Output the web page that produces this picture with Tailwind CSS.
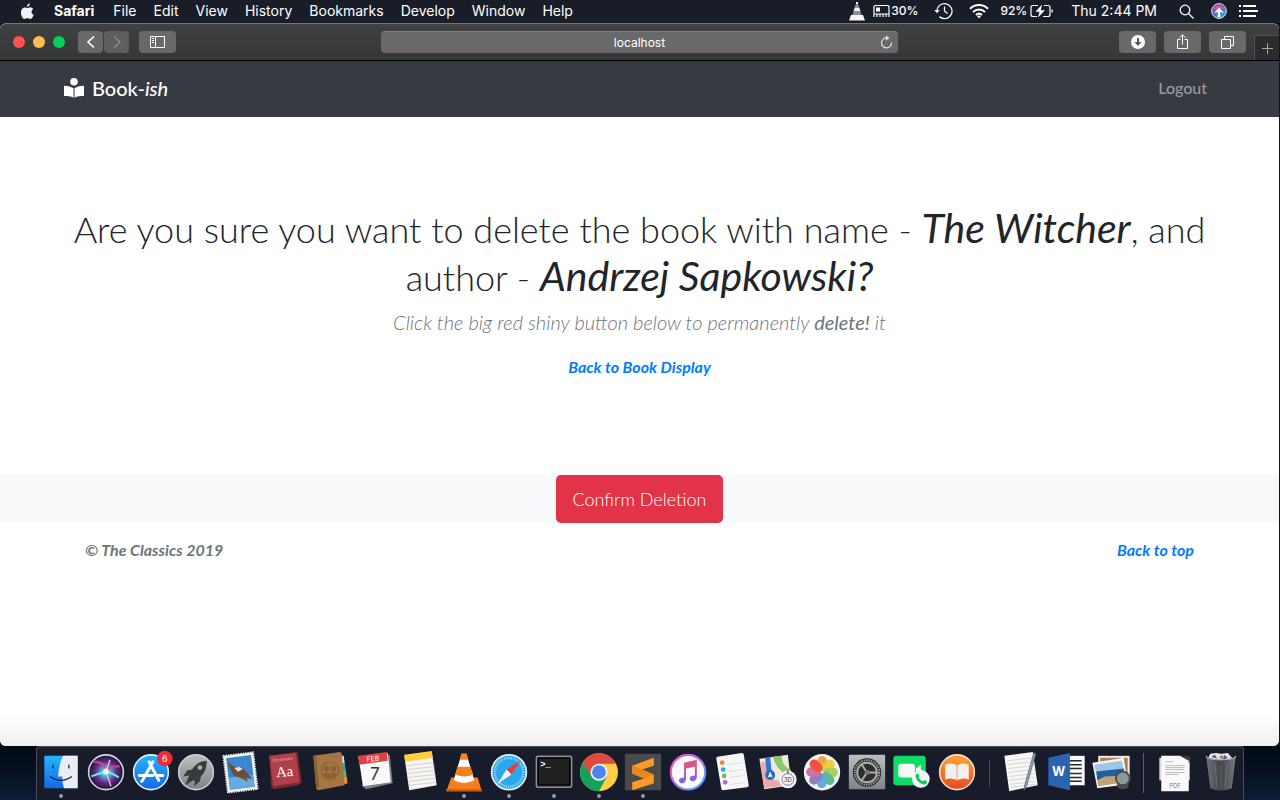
<!DOCTYPE html>
<html lang="en">
<head>
<meta charset="utf-8">
<title>Book-ish</title>
<script src="https://cdn.jsdelivr.net/npm/@tailwindcss/browser@4"></script>
</head>
<body class="min-h-screen flex flex-col overflow-x-hidden bg-[#0b1526] font-['Inter',sans-serif]">

<!-- Menu bar -->
<header class="h-[23px] shrink-0 flex items-center justify-between bg-[#191d28] pl-5 pr-[22px] pb-px text-[14px] leading-[22px] text-white">
  <nav class="flex items-center gap-[17px] whitespace-nowrap" aria-label="Menu bar">
    <button class="mr-[3px]" aria-label="Apple"><svg width="14" height="18" viewBox="0 0 14 18" fill="#f2f2f2"><path d="M9.9 1.6C9.9 3.4 8.6 4.9 7 5c-.2-1.700 1.200-3.300 2.900-3.400zM10 5.300c1.300 0 2.500.7 3.200 1.800-2.500 1.500-2 5 .5 5.900-.6 1.700-2 4-3.400 4-1.200 0-1.600-.7-2.900-.7s-1.800.7-2.900.7C2.700 17 .9 13.500.9 10.500c0-3.200 2-5.100 4-5.100 1.200 0 2 .7 2.800.7.600 0 1.500-.8 2.300-.8z"/></svg></button>
    <button class="font-bold mr-[2px]">Safari</button>
    <button>File</button><button>Edit</button><button>View</button><button>History</button><button>Bookmarks</button><button>Develop</button><button>Window</button><button>Help</button>
  </nav>
  <div class="flex items-center whitespace-nowrap">
    <svg class="mr-2" width="16" height="20" viewBox="0 0 16 20"><path d="M7 2.500h2l1.300 4H5.700zM4.600 10h6.800l1.200 4H3.400z" fill="#8b8e94"/><path d="M5.700 6.500h4.600l1.100 3.500H4.600zM2 14h12l2 5.500H0zM7 1h2v2H7z" fill="#f3f3f3"/></svg>
    <svg class="mr-px" width="17" height="14" viewBox="0 0 17 14" fill="none" stroke="#fff" stroke-width="1.200"><path d="M1 10V2.500L2 1.500h13l1 1V10zM1 10v3M4 10v3M7 10v3M10 10v3M13 10v3M16 10v3"/><path d="M3 3.500h4v4H3z" fill="#fff" stroke="none"/></svg>
    <span class="mr-4 text-xs font-medium">30%</span>
    <svg class="mr-[16px]" width="19" height="18" viewBox="0 0 19 18" fill="none" stroke="#fff" stroke-width="1.200"><path d="M3 9a7.500 7.500 0 1 1 2.500 5.700" /><path d="M5.500 14.700a7.500 7.500 0 0 0 4 1.800" stroke-dasharray="1 1"/><path d="M10.500 4.500V9l3 2.500"/><path d="M.3 8h5.400L3 11.200z" fill="#fff" stroke="none"/></svg>
    <svg class="mr-[11px]" width="20" height="16" viewBox="0 0 20 16" fill="none" stroke="#fff" stroke-width="2"><path d="M1 5.800C6 .8 14 .8 19 5.800M4 9c3.400-3.300 8.600-3.300 12 0M7 12c1.800-1.600 4.200-1.600 6 0"/><path d="M10 15.500l-2-2.200c1.200-1 2.800-1 4 0z" fill="#fff" stroke="none"/></svg>
    <span class="mr-[3px] text-xs font-medium">92%</span>
    <svg class="mr-[17px]" width="24" height="14" viewBox="0 0 24 14" fill="none" stroke="#fff" stroke-width="1.200"><path d="M8 1.500H3Q1 1.500 1 3.500v7q0 2 2 2h4M14 1.500h4q2 0 2 2v7q0 2-2 2h-5"/><path d="M12 .5L5.500 7.700h4L8 13.500 15 6.300h-4.200zM21.500 5q3 2 0 4z" fill="#fff" stroke="none"/></svg>
    <span class="mr-[22px]">Thu 2:44 PM</span>
    <button class="mr-[17px]" aria-label="Search"><svg width="15" height="15" viewBox="0 0 15 15" fill="none" stroke="#fff" stroke-width="1.300"><circle cx="6" cy="6" r="4.800"/><path d="M9.500 9.500l5 5"/></svg></button>
    <button class="mr-3" aria-label="Siri"><svg width="16" height="16" viewBox="0 0 16 16"><defs><linearGradient id="s1" x2="1" y2="1"><stop stop-color="#b03cc9"/><stop offset=".5" stop-color="#3a6fd0"/><stop offset="1" stop-color="#25c8d8"/></linearGradient></defs><circle cx="8" cy="8" r="7.400" fill="url(#s1)" stroke="#ddd"/><path d="M1.500 5.500Q8 0 14 5.500L8 7z" fill="#ec4f8d"/><path d="M8 4.500l5 5.500-4-1 .5 5h-3L7 9l-4 1z" fill="#fff"/></svg></button>
    <button aria-label="Notifications"><svg width="19" height="12" viewBox="0 0 19 12" stroke="#fff" stroke-width="2"><path d="M0 1h2M0 6h2M0 11h2M4 1h13M4 6h15M4 11h13" /></svg></button>
  </div>
</header>

<!-- Browser window -->
<div class="grow mr-px flex flex-col rounded-t-md rounded-b-md overflow-hidden bg-white border-t border-[#747576]">
  <div class="relative h-[37px] shrink-0 grid grid-cols-[1fr_517px_1fr] items-center bg-linear-to-b from-[#404142] to-[#353637] border-b border-black text-white">
    <div class="flex items-center pl-[13px]">
      <div class="flex gap-2 mr-[13px]">
        <button class="size-3 rounded-full bg-[#ff5250]" aria-label="Close"></button>
        <button class="size-3 rounded-full bg-[#ffbd4f]" aria-label="Minimize"></button>
        <button class="size-3 rounded-full bg-[#05cf58]" aria-label="Zoom"></button>
      </div>
      <button class="w-[25px] h-[22px] grid place-items-center rounded bg-[#68696b] mr-px" aria-label="Back"><svg width="10" height="14" viewBox="0 0 10 14" fill="none" stroke="#fff" stroke-width="1.600"><path d="M8 1.500L2 7l6 5.500"/></svg></button>
      <button class="w-[25px] h-[22px] grid place-items-center rounded bg-[#5d5e60] mr-[10px]" aria-label="Forward"><svg width="10" height="14" viewBox="0 0 10 14" fill="none" stroke="#8c8d8f" stroke-width="1.400"><path d="M2 1.500L8 7l-6 5.500"/></svg></button>
      <button class="w-[37px] h-[22px] grid place-items-center rounded bg-[#68696b]" aria-label="Sidebar"><svg width="15" height="12" viewBox="0 0 15 12" fill="none" stroke="#fff"><path d="M.5.500h14v11H.5zM5.500.500v11M2 2.500h2M2 4.500h2M2 6.500h2"/></svg></button>
    </div>
    <div class="relative">
      <input class="block w-full h-[22px] rounded bg-[#69696b] border-t border-[#7d7d7f] text-center text-xs text-white" type="text" value="localhost" aria-label="Address">
      <button class="absolute right-[5px] top-1" aria-label="Reload"><svg width="13" height="14" viewBox="0 0 13 14" fill="none" stroke="#e4e4e4" stroke-width="1.200"><path d="M7.500 3A5 5 0 1 0 11.500 7.500"/><path d="M6 .5v5L9.500 3z" fill="#e4e4e4" stroke="none"/></svg></button>
    </div>
    <div class="flex items-center justify-end gap-2 pr-[33px]">
      <button class="w-[37px] h-[22px] grid place-items-center rounded bg-[#68696b]" aria-label="Downloads"><svg width="14" height="14" viewBox="0 0 14 14"><circle cx="7" cy="7" r="7" fill="#fff"/><path d="M6 3h2v4h2.500L7 11 3.500 7H6z" fill="#58595b"/></svg></button>
      <button class="w-[37px] h-[22px] grid place-items-center rounded bg-[#68696b]" aria-label="Share"><svg width="11" height="16" viewBox="0 0 11 16" fill="none" stroke="#fff"><path d="M3.500 5.500H.5v9h10v-9H7.500M5.500 10.500V1M2.500 3.800l3-3 3 3"/></svg></button>
      <button class="w-[37px] h-[22px] grid place-items-center rounded bg-[#68696b]" aria-label="Tabs"><svg width="13" height="13" viewBox="0 0 13 13" fill="none" stroke="#fff"><path d="M.5 3.500h9v9h-9zM3.500 3.500V.500h9v9h-3"/></svg></button>
    </div>
    <button class="absolute right-0 bottom-0 w-[25px] h-[25px] grid place-items-center bg-[#2b2b2c] border-l border-t border-[#525354]" aria-label="New tab"><svg width="11" height="11" viewBox="0 0 11 11" stroke="#a5a5a6"><path d="M5.500 0v11M0 5.500h11"/></svg></button>
  </div>

  <div class="grow flex flex-col font-['Lato',sans-serif] text-[#212529] bg-linear-to-t from-[#eeeeee] via-white via-[30px] to-white">
    <nav class="h-14 shrink-0 flex items-center justify-between bg-[#363a42] pl-16 pr-[72px] pb-0.5">
      <a href="#" class="flex items-center gap-2 text-[20px] leading-[30px] text-white"><svg width="20" height="20" viewBox="0 0 20 20" fill="#fff"><circle cx="10" cy="3.800" r="3.800"/><path d="M0 7.800c3.600 0 7 .8 9.500 2.500v9.500C7 18.200 3.800 18 0 18zM20 7.800c-3.600 0-7 .8-9.500 2.500v9.500c2.500-1.600 5.700-1.800 9.500-1.800z"/></svg><span class="font-medium">Book-<i>ish</i></span></a>
      <a href="#" class="text-base text-[#999b9e] font-medium">Logout</a>
    </nav>
    <main class="flex flex-col items-center">
      <section class="px-8 pt-[88px] pb-24 text-center max-w-[1200px]">
        <h1 class="text-[36px] leading-[48px] font-light">Are you sure you want to delete the book with name - <b class="text-[41px] leading-none"><i>The Witcher</i></b>, and author - <b class="text-[41px] leading-none"><i>Andrzej Sapkowski?</i></b></h1>
        <p class="mt-1.5 mb-4.5 text-[20px] leading-[30px] font-light italic text-[#6c757d]">Click the big red shiny button below to permanently <b>delete!</b> it</p>
        <a href="#" class="text-base font-bold italic text-[#007bff]">Back to Book Display</a>
      </section>
      <div class="w-full flex justify-center bg-[#f7f9fb]">
        <button class="h-12 px-[17px] rounded-[5px] bg-[#e23349] text-[18px] font-light text-white">Confirm Deletion</button>
      </div>
    </main>
    <footer class="flex justify-between px-[85px] pt-[15px] text-base italic font-bold text-[#6c757d]">
      <p>© The Classics 2019</p>
      <a href="#" class="text-[#007bff]">Back to top</a>
    </footer>
  </div>
</div>

<!-- Dock -->
<div class="h-[54px] shrink-0 bg-linear-to-b from-[#030914] to-[#0d1b35]">
<svg class="absolute size-0" aria-hidden="true"><defs>
<linearGradient id="gb" x2="0" y2="1"><stop stop-color="#22b6fa"/><stop offset="1" stop-color="#1468ea"/></linearGradient>
<linearGradient id="go" x2="0" y2="1"><stop stop-color="#fba733"/><stop offset="1" stop-color="#e8481e"/></linearGradient>
<linearGradient id="gg" x2="0" y2="1"><stop stop-color="#b9c0c0"/><stop offset="1" stop-color="#7b8384"/></linearGradient>
<linearGradient id="gm" x2="1" y2="1"><stop stop-color="#f64fa6"/><stop offset=".5" stop-color="#a86bf0"/><stop offset="1" stop-color="#2fb8f5"/></linearGradient>
<linearGradient id="gn" x2="0" y2="1"><stop stop-color="#f3526a"/><stop offset="1" stop-color="#6d6af0"/></linearGradient>
<linearGradient id="gt" x2="1"><stop stop-color="#6d7376"/><stop offset=".5" stop-color="#3f4548"/><stop offset="1" stop-color="#777c7e"/></linearGradient>
<radialGradient id="gs"><stop stop-color="#bffcff"/><stop offset=".25" stop-color="#4cb8d0"/><stop offset=".6" stop-color="#6b2a86"/><stop offset="1" stop-color="#131638"/></radialGradient>
</defs></svg>
<div class="h-full mx-9 flex items-start rounded-t border-t border-x border-[#4a4e58] bg-[#171b2a] pl-[2px]">
  <div class="flex-1 flex justify-center"><svg width="44" height="53" viewBox="0 0 44 54"><path d="M5 9h34v33H5z" fill="url(#gb)"/><path d="M24 9h15v33H25q-2-7-1.500-12H19Q20 17 24 9z" fill="#e9eef5"/><path d="M14 18v4M30 18v4" stroke="#123" stroke-width="1.300"/><path d="M11 30q11 8 22 0" fill="none" stroke="#123" stroke-width="1.300"/><circle cx="22" cy="50" r="2" fill="#9a9ca6"/></svg></div>
  <div class="flex-1 flex justify-center"><svg width="44" height="53" viewBox="0 0 44 54"><circle cx="22" cy="25.700" r="17.700" fill="url(#gs)" stroke="#d5d6dc" stroke-width="1.600"/><path d="M9 15Q20 14 22 26q5-8 14-6" fill="none" stroke="#e0458f" stroke-width="2.500" opacity=".8"/><path d="M7 30q8-3 15-5 7 2 13 6" fill="none" stroke="#67f0e8" stroke-width="2"/><path d="M22 25l5 15M22 25l4-12" stroke="#f0aee0" stroke-width="1.500"/><circle cx="22" cy="25" r="3" fill="#fff" opacity=".8"/></svg></div>
  <div class="flex-1 flex justify-center"><svg width="44" height="53" viewBox="0 0 44 54"><circle cx="22" cy="25.700" r="17.700" fill="url(#gb)" stroke="#e4ecf5" stroke-width="1.600"/><path d="M20 15l10 19M24 15l-9 16M14 33l-1.500 2M10 29h14M28 29h6" stroke="#fff" stroke-width="3" stroke-linecap="round"/><circle cx="36" cy="11.700" r="8" fill="#ec2d34"/><text x="36" y="15" text-anchor="middle" font-size="9" fill="#fff">6</text></svg></div>
  <div class="flex-1 flex justify-center"><svg width="44" height="53" viewBox="0 0 44 54"><circle cx="22" cy="25.700" r="17.700" fill="url(#gg)" stroke="#c9cfcf" stroke-width="1.600"/><path d="M33 14c-7 0-12 4-15 9l-5 1-4 6 6-1-2 5-2 5 8-5 2 1-1 5 6-5 1-5c4-4 6-9 6-16z" fill="#373b3e"/><circle cx="26" cy="21" r="2.400" fill="#a8afb0"/></svg></div>
  <div class="flex-1 flex justify-center"><svg width="44" height="53" viewBox="0 0 44 54"><g transform="rotate(-7 22 26)"><path d="M8.500 8.500h28v35h-28z" fill="#3b86cc" stroke="#f1f1ef" stroke-width="2.500"/><path d="M7 7h31v38H7z" fill="none" stroke="#f1f1ef" stroke-width="1.500" stroke-dasharray="1.500 1"/><path d="M10 30h25v12H10z" fill="#68a9de"/><path d="M11 14q4 2 8 8l7 1 8 11-6-2 1 4-8-5-6-3q-3-8-4-14z" fill="#6b4f38"/><path d="M17 21l5-1 3 3-5 2z" fill="#e8ddc7"/></g></svg></div>
  <div class="flex-1 flex justify-center"><svg width="44" height="53" viewBox="0 0 44 54"><path d="M6 9l27-4q2 0 2 2l4 29-3 3-26 4-2-2z" fill="#7a2a2e"/><path d="M6 9l27-3 4 30-27 4z" fill="#b04047"/><text x="20" y="14" font-family="Liberation Serif" font-size="5" fill="#e4bcbc" text-anchor="middle" transform="rotate(-7 20 14)">Dictionary</text><text x="22" y="30" font-family="Liberation Serif" font-size="15" fill="#fff" text-anchor="middle" transform="rotate(-5 22 30)">Aa</text></svg></div>
  <div class="flex-1 flex justify-center"><svg width="44" height="53" viewBox="0 0 44 54"><path d="M32 9l4 0 1 8-4 1z" fill="#ddd"/><path d="M33 17l4-1 1 7-4 1z" fill="#25a9d8"/><path d="M34 24l4-1 1 7-4 1z" fill="#52be5a"/><path d="M35 31l4-1 1 7-4 1z" fill="#f2912e"/><path d="M5 9l27-4q1 0 2 2l3 32-27 5-2-2z" fill="#a57542"/><path d="M5 9l3 33 3-1L8 9z" fill="#8c5f33"/><circle cx="22" cy="24" r="9" fill="none" stroke="#8a6033" stroke-width="1.200"/><g fill="#8a6033"><circle cx="18.500" cy="22" r="2.800"/><circle cx="25.500" cy="22" r="2.800"/><path d="M14 29q4.500-6 8-1 3.500-5 8 1-8 5-16 0z"/></g></svg></div>
  <div class="flex-1 flex justify-center"><svg width="44" height="53" viewBox="0 0 44 54"><path d="M7 13l30-5 3 29-27 6-4-3z" fill="#75818b"/><path d="M5 10l30-4 3 30-28 4z" fill="#fafafa"/><path d="M5 9l29-4 1 9-29 4z" fill="#e33f43"/><text x="20" y="14.500" font-size="7" fill="#fff" text-anchor="middle" transform="rotate(-5 20 14)">FEB</text><text x="22" y="34" font-size="17" fill="#333" text-anchor="middle">7</text></svg></div>
  <div class="flex-1 flex justify-center"><svg width="44" height="53" viewBox="0 0 44 54"><path d="M6 9l28-4 5 34-28 5z" fill="#f7f6f2"/><path d="M6 8l28-4 1 7-28 4z" fill="#ffce3c"/><path d="M8 19l28-3M9 23l28-3M9 27l28-3M10 31l28-3M10 35l28-3M11 39l27-3" stroke="#c9cbc9" stroke-width=".8"/></svg></div>
  <div class="flex-1 flex justify-center"><svg width="44" height="53" viewBox="0 0 44 54"><path d="M9 31h27l4 14H4z" fill="#f27e21"/><path d="M4 43h36v2H4z" fill="#cc5f12"/><path d="M19.500 7h5l8 27q-10.500 6-21 0z" fill="#fff"/><path d="M19.500 7h5l2 6h-9zM15.500 20h13l3 8q-9 4-18.500 0zM11 34q11 6 22 0l1 3q-12 6-24 0z" fill="#f58220"/><circle cx="22" cy="50" r="2" fill="#9a9ca6"/></svg></div>
  <div class="flex-1 flex justify-center"><svg width="44" height="53" viewBox="0 0 44 54"><circle cx="22" cy="25.700" r="17.700" fill="#2aa8ec" stroke="#e6ecf0" stroke-width="1.800"/><circle cx="22" cy="25.700" r="14.500" fill="none" stroke="#bde8fc" stroke-width="2.500" stroke-dasharray=".7 1.200"/><path d="M34 13.500L19.500 23l5 5z" fill="#ec3b3e"/><path d="M10 38l9.500-15 5 5z" fill="#f3f5f7"/><circle cx="22" cy="50" r="2" fill="#9a9ca6"/></svg></div>
  <div class="flex-1 flex justify-center"><svg width="44" height="53" viewBox="0 0 44 54"><rect x="4" y="9.500" width="36" height="31.500" rx="1.500" fill="#202020" stroke="#8e9192" stroke-width="1.500"/><path d="M6 11.500h32v27H6z" fill="none" stroke="#000"/><text x="8" y="20" font-family="Liberation Mono" font-size="9" font-weight="bold" fill="#fff">&gt;_</text><circle cx="22" cy="50" r="2" fill="#9a9ca6"/></svg></div>
  <div class="flex-1 flex justify-center"><svg width="44" height="53" viewBox="0 0 44 54"><circle cx="22" cy="25.700" r="19.300" fill="#ffcd46"/><path d="M5.300 16A19.300 19.300 0 0 0 22 45l8-15-8-4.300z" fill="#15a05c"/><path d="M22 17h17.200A19.300 19.300 0 0 0 5.300 16l9 14z" fill="#dd4b3e"/><circle cx="22" cy="25.700" r="8.700" fill="#f3f3f3"/><circle cx="22" cy="25.700" r="7" fill="#4a86ee"/><circle cx="22" cy="50" r="2" fill="#9a9ca6"/></svg></div>
  <div class="flex-1 flex justify-center"><svg width="44" height="53" viewBox="0 0 44 54"><rect x="3.500" y="7" width="37" height="37" rx="1" fill="#4a4a4a"/><path d="M11 19l22-8v8l-12 4 12 5v9l-22 7v-8l12-4-12-5z" fill="#ff9a28"/><path d="M11 19l10 4 12 5-10 4-12-5z" fill="#e9861c"/><circle cx="22" cy="50" r="2" fill="#9a9ca6"/></svg></div>
  <div class="flex-1 flex justify-center"><svg width="44" height="53" viewBox="0 0 44 54"><circle cx="22" cy="25.700" r="17.600" fill="#fbf9fd" stroke="url(#gm)" stroke-width="2.200"/><path d="M18 16l13-3v18q-1 4-5 4-3-1-2-4 1-2 5-2v-9l-9 2v11q-1 4-5 4-3-1-2-4 1-2 5-2z" fill="url(#gn)"/></svg></div>
  <div class="flex-1 flex justify-center"><svg width="44" height="53" viewBox="0 0 44 54"><path d="M6 10l25-4q2 0 2 2l5 31q0 2-2 2l-24 3q-2 0-2-2L5 12q0-2 1-2z" fill="#f7f7f7"/><circle cx="11" cy="16" r="2.400" fill="#f7842c"/><circle cx="12" cy="23" r="2.400" fill="#25a8ee"/><circle cx="13" cy="29.500" r="2.400" fill="#55cb4d"/><circle cx="14" cy="36" r="2.400" fill="#bb62d8"/><path d="M16 18l16-2M17 25l16-2M18 31l16-2M19 38l16-2" stroke="#d5d5d5" stroke-width=".8"/></svg></div>
  <div class="flex-1 flex justify-center"><svg width="44" height="53" viewBox="0 0 44 54"><path d="M3 12l29-4 4 31-28 4z" fill="#eee9d9"/><path d="M17 10l9-1q-1 10 9 14v6q-15-4-18-19z" fill="#84c96e"/><path d="M4 16l5-1 5 17 20 6v1L8 42z" fill="#f0a8ab"/><path d="M20 33l14-4v6z" fill="#f9d264"/><path d="M9 11l5-1 2 20-5 1z" fill="#2b78d4"/><circle cx="14" cy="28.500" r="5" fill="#1d6ccc"/><path d="M14 25l2.500 6-2.500-1-2.500 1z" fill="#fff"/><circle cx="32" cy="33" r="9" fill="#f2f3f4"/><circle cx="32" cy="33" r="6" fill="none" stroke="#77a"/><text x="32" y="35.500" text-anchor="middle" font-size="6" fill="#333">3D</text><path d="M32 24v3" stroke="#d33" stroke-width="1.500"/></svg></div>
  <div class="flex-1 flex justify-center"><svg width="44" height="53" viewBox="0 0 44 54"><circle cx="22" cy="25.700" r="18.500" fill="#f5f3f1"/><g opacity=".92"><rect x="17.500" y="9.500" width="9.500" height="15" rx="4.700" fill="#f69a31"/><rect x="17.500" y="9.500" width="9.500" height="15" rx="4.700" fill="#e8cf2d" transform="rotate(45 22 25.700)"/><rect x="17.500" y="9.500" width="9.500" height="15" rx="4.700" fill="#a3cc50" transform="rotate(90 22 25.700)"/><rect x="17.500" y="9.500" width="9.500" height="15" rx="4.700" fill="#50b78a" transform="rotate(135 22 25.700)"/><rect x="17.500" y="9.500" width="9.500" height="15" rx="4.700" fill="#5aa3dc" transform="rotate(180 22 25.700)"/><rect x="17.500" y="9.500" width="9.500" height="15" rx="4.700" fill="#8677bd" transform="rotate(225 22 25.700)"/><rect x="17.500" y="9.500" width="9.500" height="15" rx="4.700" fill="#c76aa2" transform="rotate(270 22 25.700)"/><rect x="17.500" y="9.500" width="9.500" height="15" rx="4.700" fill="#ee4433" transform="rotate(315 22 25.700)"/></g></svg></div>
  <div class="flex-1 flex justify-center"><svg width="44" height="53" viewBox="0 0 44 54"><rect x="3.500" y="8" width="37" height="35" rx="1" fill="url(#gg)"/><circle cx="22" cy="26" r="14.500" fill="#2b2d2f"/><circle cx="22" cy="26" r="12.500" fill="none" stroke="#999da0" stroke-width="2" stroke-dasharray="1.400 1"/><circle cx="22" cy="26" r="10" fill="none" stroke="#a9adb0" stroke-width="2"/><path d="M22 26h10M22 26l-6-9M22 26l-6 9" stroke="#a9adb0" stroke-width="2"/><circle cx="22" cy="26" r="2.500" fill="#777"/></svg></div>
  <div class="flex-1 flex justify-center"><svg width="44" height="53" viewBox="0 0 44 54"><rect x="3" y="9" width="33" height="30" rx="3" fill="#0fdc68"/><rect x="8" y="17" width="17" height="14" rx="3" fill="#f5f8f6"/><path d="M26 22l5-4v13l-5-4z" fill="#f5f8f6"/><circle cx="31" cy="32.500" r="9" fill="#f2f5f3"/><path d="M26 28q1-2 3 0 1 2 0 3 1 3 4 4 2-2 4 0 1 2-1 3-4 1-8-3-3-4-2-7z" fill="#13c75c"/></svg></div>
  <div class="flex-1 flex justify-center"><svg width="44" height="53" viewBox="0 0 44 54"><circle cx="22" cy="25.700" r="17.700" fill="url(#go)" stroke="#f6dcc8" stroke-width="1.600"/><path d="M10 18q7-3 12 1 5-4 12-1v15q-7-2-12 1-5-3-12-1z" fill="#f4efec"/><path d="M22 19v15" stroke="#c9a99b"/></svg></div>
  <div class="w-5 flex justify-center pt-[13px]"><div class="w-px h-[27px] bg-[#4b4e59]"></div></div>
  <div class="flex-1 flex justify-center"><svg width="44" height="53" viewBox="0 0 44 54"><path d="M5 9l29-4 5 34-29 6z" fill="#f7f7f5"/><path d="M8 14l26-3M8 18l26-3M9 22l26-3M9 26l26-3M10 30l26-3M10 34l26-3M11 38l26-3M11 41l26-3" stroke="#d4c9c9" stroke-width=".8"/><path d="M35 6l2 1-9 32-3 5 1-6z" fill="#8aa2b4" stroke="#5b6f7e" stroke-width=".8"/></svg></div>
  <div class="flex-1 flex justify-center"><svg width="44" height="53" viewBox="0 0 44 54"><path d="M20 9h21v30H20z" fill="#fafafa"/><path d="M25 14h13M25 18h13M25 22h13M25 27h13M25 31h13M25 35h13" stroke="#262b33" stroke-width="1.500"/><path d="M4 11l22-5v38L4 39z" fill="#2a64b0"/><text x="14.500" y="30" text-anchor="middle" font-size="13" font-weight="bold" fill="#fff">W</text></svg></div>
  <div class="flex-1 flex justify-center"><svg width="44" height="53" viewBox="0 0 44 54"><path d="M9 9h32v26H9z" fill="#f2ede4"/><path d="M11 11h28v22H11z" fill="#a97f54"/><path d="M3 16l32-5 4 27-31 4z" fill="#f5f5f2"/><path d="M5 18l28-4 2 10-28 4z" fill="#9cc6ea"/><path d="M7 25l28-3 1 8-28 4z" fill="#245f9f"/><path d="M8 34l8-4 19-1 1 7-27 4z" fill="#c3a077"/><circle cx="34" cy="32" r="7" fill="#8b989c" stroke="#474b4d" stroke-width="1.800"/><path d="M28 38h12v3q-6 4-12 0z" fill="#4a4b49"/></svg></div>
  <div class="w-5 flex justify-center pt-1.5"><div class="w-px h-10 bg-[#5b5e69]"></div></div>
  <div class="flex-1 flex justify-center"><svg width="44" height="53" viewBox="0 0 44 54"><path d="M5 11h31v23H5z" fill="#ddd8d0"/><path d="M10 9h26v7H10z" fill="#3b3532"/><path d="M7 9h19l9 5v31H7z" fill="#fafafa"/><path d="M11 15h8M11 19h20M11 21h20M11 23h19M11 26h20M11 28h14" stroke="#aaa" stroke-width=".8"/><text x="21" y="42" text-anchor="middle" font-size="6" fill="#777">PDF</text></svg></div>
  <div class="flex-1 flex justify-center"><svg width="44" height="53" viewBox="0 0 44 54"><path d="M8 13l3-6 6-1 5 1 7-1 5 6-3 5H11z" fill="#e5e5e5"/><path d="M12 10l4-2 2 4zM25 8l4 3-5 2z" fill="#4b5b88"/><path d="M20 11l3-3 1 4z" fill="#c94c38"/><path d="M7 10q15 7 30 0l-4 32q-11 5-22 0z" fill="url(#gt)"/><path d="M7 9q0 4 15 4t15-4" fill="none" stroke="#a5aaac" stroke-width="1.200"/><path d="M16 17l2 24M28 17l-2 24M22 18v23" stroke="#899094" stroke-width=".8" opacity=".6"/></svg></div>
</div>
</div>
</body>
</html>
